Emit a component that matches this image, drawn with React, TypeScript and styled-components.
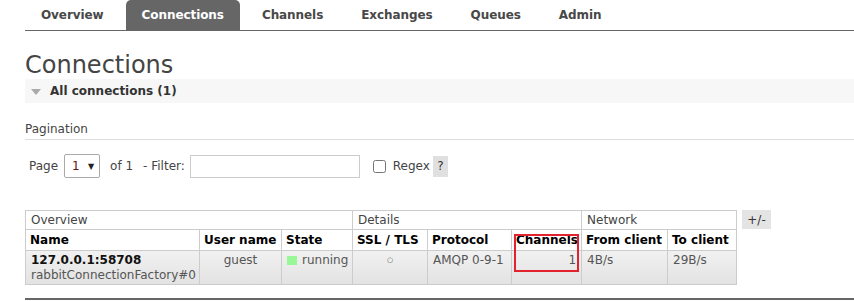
import styled, { createGlobalStyle } from 'styled-components';

const GlobalStyle = createGlobalStyle`
  html, body {
    margin: 0;
    padding: 0;
    background: #fff;
  }
  body {
    font-family: "DejaVu Sans", Verdana, sans-serif;
    font-size: 12px;
    color: #444;
  }
  * {
    box-sizing: border-box;
  }
`;

const Page = styled.div`
  padding-left: 25px;
  width: 854px;
  overflow: hidden;
`;

const Nav = styled.ul`
  display: flex;
  gap: 6px;
  margin: 0;
  padding: 0;
  list-style: none;
  height: 31px;
  border-bottom: 1px solid #666;
`;

const Tab = styled.li<{ $active?: boolean }>`
  padding: 0 16px;
  line-height: 30px;
  font-weight: bold;
  letter-spacing: -0.08px;
  color: ${({ $active }) => ($active ? '#fff' : '#484848')};
  background: ${({ $active }) => ($active ? '#666' : 'transparent')};
  border-radius: 5px 5px 0 0;
`;

const Title = styled.h1`
  margin: 20px 0 0;
  font-size: 24px;
  line-height: 28px;
  font-weight: normal;
  color: #444;
`;

const SectionBar = styled.div`
  display: flex;
  align-items: center;
  height: 24px;
  background: #f7f7f7;
  font-weight: bold;
  color: #333;
`;

const Triangle = styled.span`
  width: 0;
  height: 0;
  margin: 1px 9px 0 6px;
  border-left: 5.5px solid transparent;
  border-right: 5.5px solid transparent;
  border-top: 6px solid #aaa;
`;

const SubHeading = styled.div`
  margin-top: 19px;
  line-height: 15px;
  padding-bottom: 2px;
  border-bottom: 1px solid #ddd;
  color: #444;
`;

const FilterRow = styled.div`
  display: flex;
  align-items: center;
  height: 24px;
  margin-top: 14px;
  padding-left: 4px;
  color: #444;
`;

const Gap = styled.span<{ $w: number }>`
  display: inline-block;
  width: ${({ $w }) => $w}px;
  flex: none;
`;

const SelectBox = styled.div`
  display: flex;
  align-items: center;
  justify-content: space-between;
  width: 36px;
  height: 24px;
  padding: 0 5px 0 7px;
  border: 1px solid #aaa;
  border-radius: 2px;
  color: #6a0f1c;
  background: #fff;
`;

const SelectArrow = styled.span`
  font-size: 8px;
  color: #222;
`;

const FilterInput = styled.input`
  width: 170px;
  height: 23px;
  margin: 0;
  border: 1px solid #ccc;
  font: inherit;
  padding: 0 4px;
`;

const Check = styled.input`
  width: 13px;
  height: 13px;
  margin: 0;
`;

const Help = styled.span`
  display: inline-flex;
  align-items: center;
  justify-content: center;
  width: 15px;
  height: 21px;
  background: #e0e0e0;
  color: #333;
`;

const TableArea = styled.div`
  display: flex;
  align-items: flex-start;
  margin-top: 32px;
`;

const TableWrap = styled.div`
  position: relative;
`;

const Grid = styled.table`
  width: 712px;
  table-layout: fixed;
  border-collapse: collapse;
  border: 1px solid #ccc;
`;

const Col = styled.col<{ $w: number }>`
  width: ${({ $w }) => $w}px;
`;

const GroupCell = styled.th`
  height: 19px;
  padding: 0 5px;
  border: 1px solid #ccc;
  font-weight: normal;
  text-align: left;
  color: #444;
  background: #fff;
`;

const HeadCell = styled.th`
  height: 21px;
  padding: 0 4px;
  border: 1px solid #ccc;
  font-weight: bold;
  text-align: left;
  white-space: nowrap;
  overflow: visible;
  color: #000;
  background: #fff;
`;

const Row = styled.tr`
  background: linear-gradient(#f1f1f1, #e2e2e2);
`;

const Cell = styled.td<{ $align?: 'left' | 'center' | 'right' }>`
  height: 34px;
  padding: 2px 5px 0;
  border: 1px solid #ccc;
  line-height: 15px;
  vertical-align: top;
  text-align: ${({ $align }) => $align ?? 'left'};
  color: #555;
  white-space: nowrap;
`;

const ConnName = styled.div`
  font-weight: bold;
  color: #111;
`;

const StateDot = styled.span`
  display: inline-block;
  width: 10px;
  height: 9px;
  margin-right: 5px;
  vertical-align: -1px;
  background: #98f898;
`;

const Small = styled.span`
  font-size: 7px;
  vertical-align: 2px;
`;

const ToggleButton = styled.span`
  margin-left: 5px;
  width: 29px;
  height: 19px;
  display: flex;
  align-items: center;
  justify-content: center;
  background: #e4e4e4;
  color: #333;
`;

const Highlight = styled.div`
  position: absolute;
  left: 489px;
  top: 24px;
  width: 65px;
  height: 38px;
  border: 2px solid #e2222c;
  pointer-events: none;
`;

const Rule = styled.div`
  margin-top: 13px;
  height: 2px;
  background: #666;
`;

const tabs = ['Overview', 'Connections', 'Channels', 'Exchanges', 'Queues', 'Admin'];
const widths = [174, 82, 71, 75, 84, 70, 86, 69];
const headers = ['Name', 'User name', 'State', 'SSL / TLS', 'Protocol', 'Channels', 'From client', 'To client'];

export default function App() {
  return (
    <Page>
      <GlobalStyle />
      <Nav>
        {tabs.map((t) => (
          <Tab key={t} $active={t === 'Connections'}>
            {t}
          </Tab>
        ))}
      </Nav>
      <Title>Connections</Title>
      <SectionBar>
        <Triangle />
        All connections (1)
      </SectionBar>
      <SubHeading>Pagination</SubHeading>
      <FilterRow>
        Page
        <Gap $w={6} />
        <SelectBox>
          <span>1</span>
          <SelectArrow>▼</SelectArrow>
        </SelectBox>
        <Gap $w={10} />
        of 1
        <Gap $w={10} />
        - Filter:
        <Gap $w={5} />
        <FilterInput type="text" />
        <Gap $w={13} />
        <Check type="checkbox" />
        <Gap $w={7} />
        Regex
        <Gap $w={3} />
        <Help>?</Help>
      </FilterRow>
      <TableArea>
        <TableWrap>
          <Grid>
            <colgroup>
              {widths.map((w, i) => (
                <Col key={i} $w={w} />
              ))}
            </colgroup>
            <thead>
              <tr>
                <GroupCell colSpan={3}>Overview</GroupCell>
                <GroupCell colSpan={3}>Details</GroupCell>
                <GroupCell colSpan={2}>Network</GroupCell>
              </tr>
              <tr>
                {headers.map((h) => (
                  <HeadCell key={h}>{h}</HeadCell>
                ))}
              </tr>
            </thead>
            <tbody>
              <Row>
                <Cell>
                  <ConnName>127.0.0.1:58708</ConnName>
                  rabbitConnectionFactory#0
                </Cell>
                <Cell $align="center">guest</Cell>
                <Cell>
                  <StateDot />
                  running
                </Cell>
                <Cell $align="center">
                  <Small>○</Small>
                </Cell>
                <Cell>AMQP 0-9-1</Cell>
                <Cell $align="right">1</Cell>
                <Cell>4B/s</Cell>
                <Cell>29B/s</Cell>
              </Row>
            </tbody>
          </Grid>
          <Highlight />
        </TableWrap>
        <ToggleButton>+/-</ToggleButton>
      </TableArea>
      <Rule />
    </Page>
  );
}
